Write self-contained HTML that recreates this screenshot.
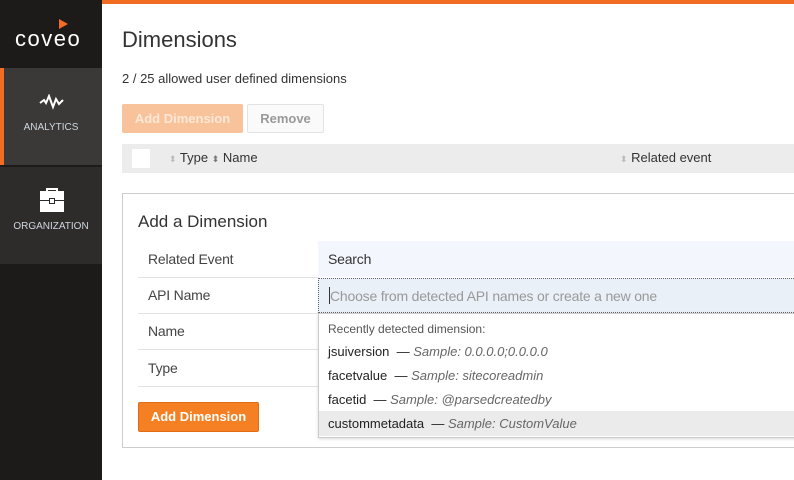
<!DOCTYPE html>
<html><head><style>
*{box-sizing:border-box;margin:0;padding:0}
body{width:794px;height:480px;overflow:hidden;background:#fff;font-family:"Liberation Sans",Arial,sans-serif;position:relative;color:#333}
.a{position:absolute}
.sb{left:0;top:0;width:102px;height:480px;background:#1c1b1a}
.lbl{font-size:10px;color:#cfd6de;width:102px;text-align:center}
.t{font-size:14px;color:#444;letter-spacing:-0.2px}
</style></head><body>
<div class="a sb"></div>
<div class="a" style="left:102px;top:0;width:692px;height:4px;background:#f26d21"></div>
<div class="a" style="left:15px;top:26px;font-size:22px;color:#fff;letter-spacing:1.5px;font-family:'Liberation Sans',sans-serif">coveo</div>
<div class="a" style="left:59px;top:19px;width:0;height:0;border-left:9px solid #f26d21;border-top:5px solid transparent;border-bottom:5px solid transparent"></div>
<div class="a" style="left:0;top:68px;width:102px;height:97px;background:#3a3937;border-left:4px solid #f26d21"></div>
<svg class="a" style="left:38px;top:94px" width="28" height="16" viewBox="0 0 28 16"><path d="M2 9 L6 6 L8 9 L11 2 L15 13 L18 5 L21 10 L25 6" stroke="#fff" stroke-width="2" fill="none"/></svg>
<div class="a lbl" style="left:0;top:122px">ANALYTICS</div>
<div class="a" style="left:0;top:167px;width:102px;height:97px;background:#2d2c2a"></div>
<div class="a" style="left:40px;top:191px;width:24px;height:21px;background:#fff"></div>
<div class="a" style="left:46px;top:188px;width:12px;height:5px;border:2px solid #fff;border-bottom:none"></div>
<div class="a" style="left:40px;top:200px;width:24px;height:1px;background:#2d2c2a"></div>
<div class="a" style="left:49px;top:198px;width:6px;height:6px;border:1px solid #2d2c2a;background:#fff"></div>
<div class="a lbl" style="left:0;top:221px">ORGANIZATION</div>

<div class="a" style="left:122px;top:27px;font-size:22px;color:#333">Dimensions</div>
<div class="a" style="left:122px;top:71px;font-size:13px;color:#333">2 / 25 allowed user defined dimensions</div>
<div class="a" style="left:122px;top:104px;width:121px;height:29px;background:#f8c29a;border-radius:2px;color:#fde8d8;font-size:13px;font-weight:bold;text-align:center;line-height:29px">Add Dimension</div>
<div class="a" style="left:247px;top:104px;width:77px;height:29px;border:1px solid #e3e3e3;background:#fafafa;border-radius:2px;color:#999;font-size:13px;font-weight:bold;text-align:center;line-height:27px">Remove</div>
<div class="a" style="left:122px;top:144px;width:672px;height:29px;background:#ececec"></div>
<div class="a" style="left:132px;top:149px;width:18px;height:19px;background:#fff"></div>
<div class="a" style="left:169px;top:150px;font-size:13px;color:#333"><span style="color:#bbb;font-size:9px">⬍</span> Type <span style="color:#777;font-size:9px">⬍</span> Name</div>
<div class="a" style="left:620px;top:150px;font-size:13px;color:#333"><span style="color:#bbb;font-size:9px">⬍</span> Related event</div>

<div class="a" style="left:122px;top:193px;width:680px;height:255px;border:1px solid #ccc"></div>
<div class="a" style="left:138px;top:212px;font-size:17px;color:#333">Add a Dimension</div>
<div class="a" style="left:318px;top:241px;width:476px;height:36px;background:#f3f6fc"></div>
<div class="a t" style="left:328px;top:251px;color:#333">Search</div>
<div class="a" style="left:138px;top:277px;width:180px;height:1px;background:#e2e2e2"></div>
<div class="a" style="left:138px;top:313px;width:180px;height:1px;background:#e2e2e2"></div>
<div class="a" style="left:138px;top:349px;width:180px;height:1px;background:#e2e2e2"></div>
<div class="a" style="left:138px;top:386px;width:180px;height:1px;background:#e2e2e2"></div>
<div class="a t" style="left:148px;top:251px">Related Event</div>
<div class="a t" style="left:148px;top:287px">API Name</div>
<div class="a t" style="left:148px;top:323px">Name</div>
<div class="a t" style="left:148px;top:360px">Type</div>
<div class="a" style="left:318px;top:278px;width:480px;height:35px;background:#eaf0f7;border:1px dotted #666"></div>
<div class="a" style="left:329px;top:287px;width:1px;height:17px;background:#333"></div>
<div class="a t" style="left:330px;top:288px;color:#999">Choose from detected API names or create a new one</div>
<div class="a" style="left:318px;top:313px;width:480px;height:125px;background:#fff;border:1px solid #ccc;box-shadow:0 1px 3px rgba(0,0,0,.15)"></div>
<div class="a" style="left:319px;top:411px;width:476px;height:25px;background:#ebebeb"></div>
<div class="a" style="left:328px;top:322px;font-size:12px;color:#555">Recently detected dimension:</div>
<div class="a" style="left:328px;top:344px;font-size:13px;color:#222">jsuiversion &nbsp;— <i style="color:#666">Sample: 0.0.0.0;0.0.0.0</i></div>
<div class="a" style="left:328px;top:368px;font-size:13px;color:#222">facetvalue &nbsp;— <i style="color:#666">Sample: sitecoreadmin</i></div>
<div class="a" style="left:328px;top:392px;font-size:13px;color:#222">facetid &nbsp;— <i style="color:#666">Sample: @parsedcreatedby</i></div>
<div class="a" style="left:328px;top:416px;font-size:13px;color:#222">custommetadata &nbsp;— <i style="color:#666">Sample: CustomValue</i></div>
<div class="a" style="left:138px;top:402px;width:121px;height:30px;background:#f58024;border:1px solid #e06c14;border-radius:2px;color:#fff;font-size:13px;font-weight:bold;text-align:center;line-height:28px">Add Dimension</div>
</body></html>
